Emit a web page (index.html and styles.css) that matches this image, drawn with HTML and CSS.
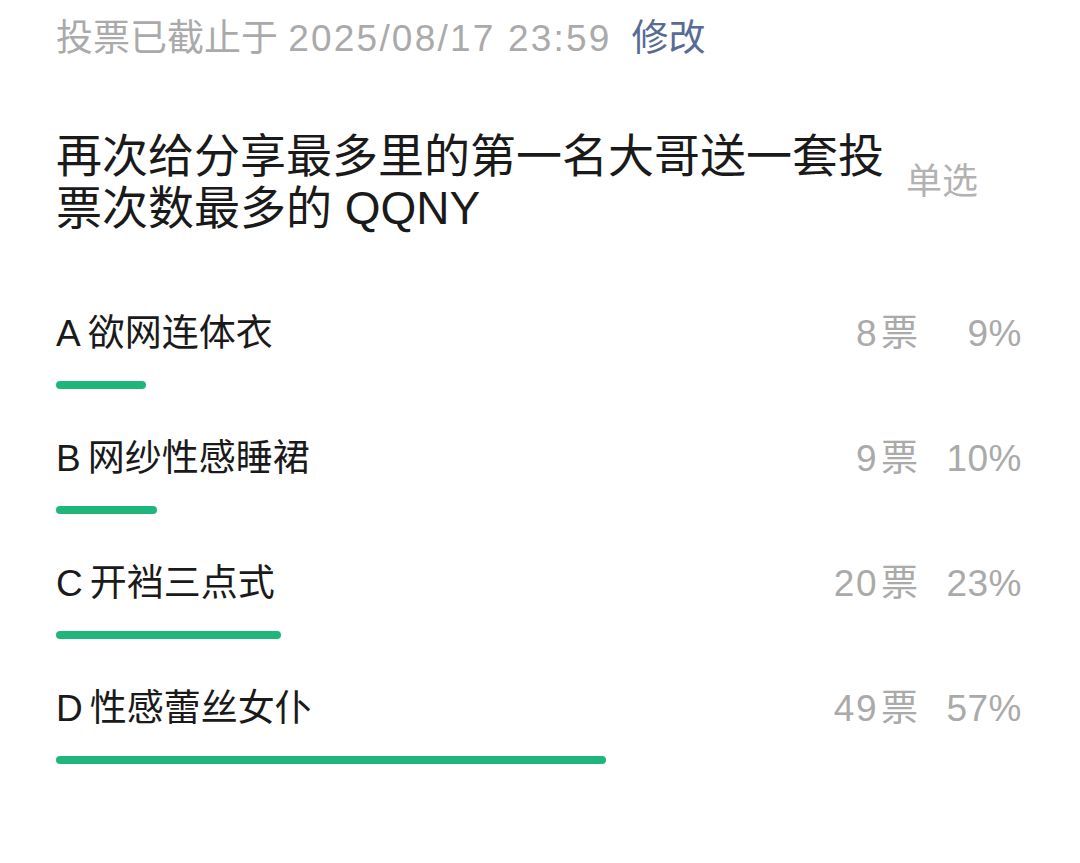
FILE: index.html
```html
<!DOCTYPE html>
<html lang="zh-CN">
<head>
<meta charset="utf-8">
<title>投票</title>
<link rel="stylesheet" href="styles.css">
</head>
<body>
<div class="page">
  <div class="deadline">投票已截止于 <span class="num">2025/08/17 23:59</span><span class="edit">修改</span></div>
  <div class="question">
    <div class="title">再次给分享最多里的第一名大哥送一套投票次数最多的 QQNY</div>
    <div class="type">单选</div>
  </div>
  <div class="options">
    <div class="option">
      <div class="row"><span class="label"><span class="letter">A</span>欲网连体衣</span><span class="votes"><span class="count">8</span>票</span><span class="pct">9%</span></div>
      <div class="track"><div class="bar" style="width: 9.3%"></div></div>
    </div>
    <div class="option">
      <div class="row"><span class="label"><span class="letter">B</span>网纱性感睡裙</span><span class="votes"><span class="count">9</span>票</span><span class="pct">10%</span></div>
      <div class="track"><div class="bar" style="width: 10.47%"></div></div>
    </div>
    <div class="option">
      <div class="row"><span class="label"><span class="letter">C</span>开裆三点式</span><span class="votes"><span class="count">20</span>票</span><span class="pct">23%</span></div>
      <div class="track"><div class="bar" style="width: 23.26%"></div></div>
    </div>
    <div class="option">
      <div class="row"><span class="label"><span class="letter">D</span>性感蕾丝女仆</span><span class="votes"><span class="count">49</span>票</span><span class="pct">57%</span></div>
      <div class="track"><div class="bar" style="width: 56.98%"></div></div>
    </div>
  </div>
</div>
</body>
</html>
```

FILE: styles.css
```css
html, body {
  margin: 0;
  padding: 0;
  background: #ffffff;
}

body {
  font-family: "Liberation Sans", "Noto Sans CJK SC", sans-serif;
  color: #1a1a1a;
}

.page {
  padding: 14px 58px 0 56px;
}

.deadline {
  font-size: 37px;
  line-height: 50px;
  color: #aaaaaa;
  white-space: nowrap;
}

.deadline .num {
  letter-spacing: 2.2px;
}

.edit {
  color: #576b95;
  margin-left: 20px;
}

.question {
  display: flex;
  align-items: center;
  margin-top: 66px;
}

.title {
  width: 840px;
  font-size: 46px;
  line-height: 52px;
  color: #1a1a1a;
}

.type {
  margin-left: 10px;
  font-size: 36px;
  line-height: 50px;
  color: #b2b2b2;
  white-space: nowrap;
}

.options {
  margin-top: 75px;
}

.option {
  margin-bottom: 45px;
}

.row {
  display: flex;
  align-items: center;
  height: 50px;
  font-size: 37px;
  line-height: 50px;
}

.label {
  flex: 1;
  color: #1a1a1a;
}

.letter {
  margin-right: 7px;
}

.votes {
  color: #aaaaaa;
  text-align: right;
}

.count {
  letter-spacing: 1.5px;
  margin-right: 3px;
}

.pct {
  width: 104px;
  text-align: right;
  color: #aaaaaa;
  letter-spacing: 0.5px;
}

.track {
  margin-top: 22px;
  height: 8px;
}

.bar {
  height: 8px;
  border-radius: 4px;
  background: #1fb67b;
}
```
